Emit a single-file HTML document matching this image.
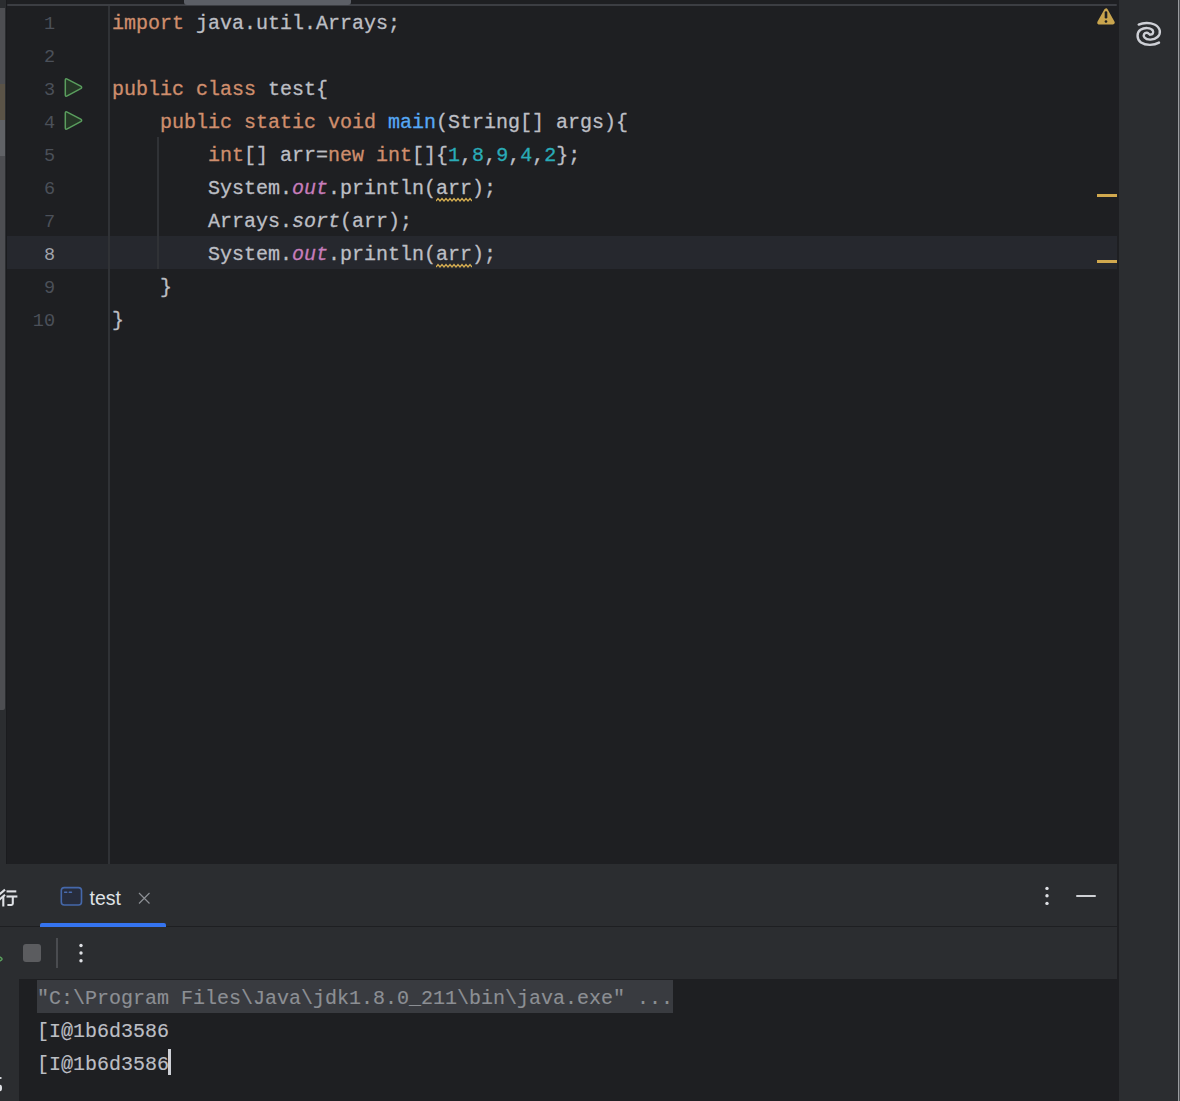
<!DOCTYPE html>
<html><head><meta charset="utf-8">
<style>
html,body{margin:0;padding:0;}
body{width:1180px;height:1101px;overflow:hidden;background:#1e1f22;position:relative;font-family:"Liberation Mono",monospace;}
.a{position:absolute;}
.code{position:absolute;left:112px;font-size:20px;line-height:33px;white-space:pre;color:#bcbec4;-webkit-text-stroke:0.3px currentColor;}
.ln{position:absolute;left:20px;width:35px;text-align:right;font-size:18.5px;line-height:33px;color:#4b5059;}
.k{color:#cf8e6d;}
.n{color:#2aacb8;}
.f{color:#c77dbb;font-style:italic;}
.i{font-style:italic;}
.m{color:#56a8f5;}
</style></head>
<body>
<!-- left strip -->
<div class="a" style="left:0;top:0;width:6px;height:864px;background:#2b2d30"></div>
<div class="a" style="left:0;top:8px;width:5px;height:76px;background:#4d4e52"></div>
<div class="a" style="left:0;top:84px;width:5px;height:36px;background:#5a5347"></div>
<div class="a" style="left:0;top:120px;width:5px;height:36px;background:#606266"></div>
<div class="a" style="left:0;top:156px;width:5px;height:554px;border-radius:0 0 2px 0;background:#4d4e52"></div>


<div class="a" style="left:6px;top:0;width:1px;height:864px;background:#1a1b1e"></div>
<!-- top horizontal scrollbar -->
<div class="a" style="left:7px;top:4px;width:1110px;height:2px;border-radius:1px;background:#3c3e43"></div>
<div class="a" style="left:184px;top:0;width:167px;height:5px;border-radius:0 0 3px 3px;background:#5c5f66"></div>

<!-- current line -->
<div class="a" style="left:7px;top:236px;width:1110px;height:33px;background:#26282e"></div>

<!-- gutter separator -->
<div class="a" style="left:108px;top:6px;width:2px;height:858px;background:#303236"></div>
<!-- indent guide -->
<div class="a" style="left:157px;top:137px;width:2px;height:132px;background:#303236"></div>

<!-- line numbers -->
<div class="ln" style="top:8px">1<br>2<br>3<br>4<br>5<br>6<br>7<br><span style="color:#a1a3ab">8</span><br>9<br>10</div>

<!-- run icons -->
<svg class="a" style="left:62px;top:75px" width="24" height="24" viewBox="0 0 24 24"><path d="M3.3 5.4 Q3.3 3.2 5.2 4.1 L18.7 11.2 Q20.6 12.4 18.7 13.6 L5.2 20.9 Q3.3 21.9 3.3 19.7 Z" fill="#253626" stroke="#5a9e5e" stroke-width="1.5" stroke-linejoin="round"/></svg>
<svg class="a" style="left:62px;top:108px" width="24" height="24" viewBox="0 0 24 24"><path d="M3.3 5.4 Q3.3 3.2 5.2 4.1 L18.7 11.2 Q20.6 12.4 18.7 13.6 L5.2 20.9 Q3.3 21.9 3.3 19.7 Z" fill="#253626" stroke="#5a9e5e" stroke-width="1.5" stroke-linejoin="round"/></svg>

<!-- code -->
<div class="code" style="top:7px"><span class="k">import</span> java.util.Arrays;

<span class="k">public class</span> test{
    <span class="k">public static void</span> <span class="m">main</span>(String[] args){
        <span class="k">int</span>[] arr=<span class="k">new int</span>[]{<span class="n">1</span>,<span class="n">8</span>,<span class="n">9</span>,<span class="n">4</span>,<span class="n">2</span>};
        System.<span class="f">out</span>.println(arr);
        Arrays.<span class="i">sort</span>(arr);
        System.<span class="f">out</span>.println(arr);
    }
}</div>

<!-- squiggles -->
<svg class="a" style="left:436px;top:197px" width="36" height="5" viewBox="0 0 36 5"><path d="M0 4 L2 1.5 L4 4 L6 1.5 L8 4 L10 1.5 L12 4 L14 1.5 L16 4 L18 1.5 L20 4 L22 1.5 L24 4 L26 1.5 L28 4 L30 1.5 L32 4 L34 1.5 L36 4" fill="none" stroke="#d2ab50" stroke-width="1.3"/></svg>
<svg class="a" style="left:436px;top:263px" width="36" height="5" viewBox="0 0 36 5"><path d="M0 4 L2 1.5 L4 4 L6 1.5 L8 4 L10 1.5 L12 4 L14 1.5 L16 4 L18 1.5 L20 4 L22 1.5 L24 4 L26 1.5 L28 4 L30 1.5 L32 4 L34 1.5 L36 4" fill="none" stroke="#d2ab50" stroke-width="1.3"/></svg>

<!-- warning icon -->
<svg class="a" style="left:1094px;top:5px" width="24" height="24" viewBox="0 0 24 24"><path d="M12 5.2 L5 17.6 L19 17.6 Z" fill="#c9a54e" stroke="#c9a54e" stroke-width="3.6" stroke-linejoin="round"/><rect x="10.7" y="6.2" width="2.6" height="7.2" rx="1.2" fill="#1e1f22"/><rect x="10.7" y="15.3" width="2.6" height="2.5" rx="1.2" fill="#1e1f22"/></svg>
<!-- markers -->
<div class="a" style="left:1097px;top:194px;width:20px;height:3px;background:#d0a84e"></div>
<div class="a" style="left:1097px;top:260px;width:20px;height:3px;background:#d0a84e"></div>

<!-- right sidebar -->
<div class="a" style="left:1119px;top:0;width:61px;height:1101px;background:#2b2d30"></div>
<div class="a" style="left:1178px;top:0;width:1px;height:1101px;background:#9a9c9f"></div>
<div class="a" style="left:1179px;top:0;width:1px;height:1101px;background:#505256"></div>


<svg class="a" style="left:1130px;top:15px" width="40" height="40" viewBox="0 0 40 40"><g fill="none" stroke="#ced0d6" stroke-width="2.4" stroke-linecap="round"><path d="M8.7 9.6 C13 7.6 20 7.4 24.5 9.5 C30.5 12.5 31.5 18.5 27.5 22 C24 25.2 17 25.5 14.5 22.5 C12.5 20 14.5 17.5 17 17.8 C18.5 18 19.2 19.3 19.6 19.4"/><path d="M29 27.6 C24 30.6 15.5 30.6 11 27.5 C6.5 24.5 6.5 17.5 10.5 14.8 C14.5 12.2 21 12.6 22.8 15.5 C24 17.8 22.5 19.8 20 19.6"/></g></svg>

<!-- bottom panel -->
<div class="a" style="left:0;top:864px;width:1117px;height:115px;background:#2b2d30"></div>
<div class="a" style="left:0;top:926px;width:1117px;height:1px;background:#1e1f22"></div>


<!-- bottom panel content -->
<svg class="a" style="left:0;top:886px" width="20" height="22" viewBox="0 886 20 22"><g fill="none" stroke="#dfe1e5" stroke-width="2.1" stroke-linecap="butt"><path d="M-1 894.6 L5 889.6"/><path d="M-1 900 L5 894.8"/><path d="M3.3 896 L3.3 906.5"/><path d="M6.5 891.4 L16.3 891.4"/><path d="M6.5 896.5 L17.4 896.5"/><path d="M12.8 896.5 L12.8 903.6 Q12.8 905 11.4 905 L7.4 905"/></g></svg>
<svg class="a" style="left:59px;top:885px" width="24" height="22" viewBox="0 0 24 22"><rect x="2.3" y="2.6" width="20.2" height="17.4" rx="3" fill="#272d3d" stroke="#4568aa" stroke-width="1.6"/><path d="M5.6 7.3 L7.8 7.3 M10.2 7.3 L12.5 7.3" stroke="#4a6cb0" stroke-width="1.4" stroke-linecap="round"/></svg>
<div class="a" style="left:89.5px;top:885.5px;font-family:'Liberation Sans',sans-serif;font-size:19.5px;line-height:24px;color:#dfe1e5">test</div>
<svg class="a" style="left:136px;top:890px" width="16" height="16" viewBox="0 0 16 16"><path d="M3 3 L13.5 13.5 M13.5 3 L3 13.5" stroke="#8c8f94" stroke-width="1.2"/></svg>
<div class="a" style="left:40px;top:923px;width:126px;height:4px;border-radius:2px 2px 0 0;background:#3574f0"></div>
<svg class="a" style="left:1040px;top:884px" width="14" height="24" viewBox="0 0 14 24"><circle cx="7" cy="4.4" r="1.7" fill="#dfe1e5"/><circle cx="7" cy="11.8" r="1.7" fill="#dfe1e5"/><circle cx="7" cy="19.4" r="1.7" fill="#dfe1e5"/></svg>
<div class="a" style="left:1076px;top:895px;width:20px;height:2px;border-radius:1px;background:#cfd1d5"></div>
<!-- toolbar -->
<svg class="a" style="left:0;top:950px" width="8" height="16" viewBox="0 0 8 16"><path d="M-8 2 L1.6 8.2 Q2.4 9 1.6 9.8 L-8 16" fill="#253626" stroke="#5a9e5e" stroke-width="1.5" stroke-linejoin="round"/></svg>
<div class="a" style="left:23px;top:944px;width:18px;height:18px;border-radius:3px;background:#5b5c5f"></div>
<div class="a" style="left:56px;top:938px;width:1.5px;height:30px;background:#4a4c50"></div>
<svg class="a" style="left:74px;top:940px" width="14" height="24" viewBox="0 0 14 24"><circle cx="7" cy="5.5" r="1.7" fill="#dfe1e5"/><circle cx="7" cy="13" r="1.7" fill="#dfe1e5"/><circle cx="7" cy="20.7" r="1.7" fill="#dfe1e5"/></svg>

<!-- console -->
<div class="a" style="left:0;top:979px;width:19px;height:122px;background:#2b2d30"></div>
<div class="a" style="left:37px;top:980px;width:636px;height:33px;background:#393b40"></div>
<div class="code" style="left:37px;top:982px;color:#bcbec4;-webkit-text-stroke:0.15px currentColor"><span style="color:#8c8f94">"C:\Program Files\Java\jdk1.8.0_211\bin\java.exe" ...</span>
[I@1b6d3586
[I@1b6d3586</div>
<svg class="a" style="left:0;top:1074px" width="4" height="20" viewBox="0 0 4 20"><ellipse cx="0" cy="4" rx="1.8" ry="1.1" fill="#dfe1e5"/><ellipse cx="0" cy="14" rx="2" ry="3.2" fill="#dfe1e5"/></svg>
<div class="a" style="left:168px;top:1049px;width:3px;height:26px;background:#ced0d6"></div>

</body></html>
